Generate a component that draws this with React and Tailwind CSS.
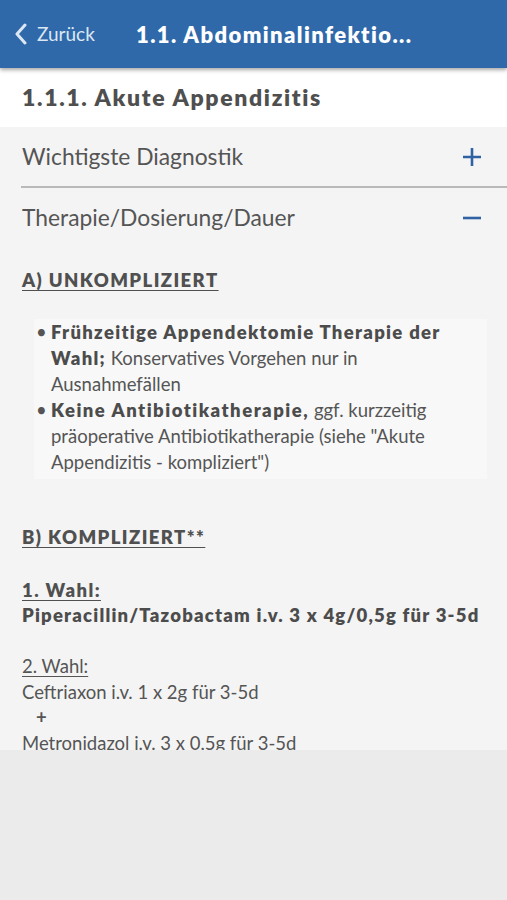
import React from 'react';

const Plus = () => (
    <svg width="20" height="20" viewBox="0 0 20 20" className="text-[#2f62a3]">
        <path d="M10 1v18M1 10h18" stroke="currentColor" strokeWidth="2.6" />
    </svg>
);

const Minus = () => (
    <svg width="20" height="20" viewBox="0 0 20 20" className="text-[#2f62a3]">
        <path d="M1 10h18" stroke="currentColor" strokeWidth="2.6" />
    </svg>
);

const App = () => {
    return (
        <div className="w-[507px] h-[900px] flex flex-col bg-[#ebebeb] font-['Lato','Noto_Sans',sans-serif] overflow-hidden">
            <header className="h-[68px] shrink-0 bg-[#2f69aa] flex items-center shadow-[0_2px_4px_rgba(0,0,0,0.35)] relative z-10">
                <div className="flex items-center pl-[14px] w-[136px] text-[#dce7f4]">
                    <svg width="14" height="22" viewBox="0 0 14 22">
                        <path d="M11 2L3 11l8 9" fill="none" stroke="currentColor" strokeWidth="3" strokeLinecap="round" strokeLinejoin="round" />
                    </svg>
                    <span className="ml-[9px] text-[19px]">Zurück</span>
                </div>
                <h1 className="text-white font-extrabold text-[22px] tracking-[1.4px] whitespace-nowrap">1.1. Abdominalinfektio...</h1>
            </header>

            <div className="h-[59px] shrink-0 bg-white flex items-center pl-[22px]">
                <h2 className="text-[#4f4f4f] font-extrabold text-[23px] tracking-[1.65px] whitespace-nowrap">1.1.1. Akute Appendizitis</h2>
            </div>

            <div className="h-[623px] shrink-0 bg-[#f4f4f4] overflow-hidden text-[#555]">
                <div className="h-[59px] flex items-center justify-between pl-[22px] pr-[25px]">
                    <span className="text-[22.8px]">Wichtigste Diagnostik</span>
                    <Plus />
                </div>
                <div className="ml-[21px] h-[2px] bg-[#b9b9b9]" />
                <div className="h-[59px] flex items-center justify-between pl-[22px] pr-[25px]">
                    <span className="text-[22.8px]">Therapie/Dosierung/Dauer</span>
                    <Minus />
                </div>

                <div className="pl-[22px] pr-[20px] pt-[20px] text-[18.5px]">
                    <p className="font-extrabold tracking-[1.4px] underline underline-offset-[3px] leading-[26px] text-[#505050]">A) UNKOMPLIZIERT</p>
                    <div className="h-[26px]" />
                    <ul className="ml-[12px] bg-[#f8f8f8] pr-[12px] pb-[4px] leading-[26px]">
                        <li className="flex">
                            <span className="w-[17px] shrink-0 pl-[2px]">•</span>
                            <span><b className="font-extrabold tracking-[1.3px] text-[#4c4c4c]">Frühzeitige Appendektomie Therapie der Wahl;</b> Konservatives Vorgehen nur in Ausnahmefällen</span>
                        </li>
                        <li className="flex">
                            <span className="w-[17px] shrink-0 pl-[2px]">•</span>
                            <span><b className="font-extrabold tracking-[1.5px] text-[#4c4c4c]">Keine Antibiotikatherapie,</b> ggf. kurzzeitig präoperative Antibiotikatherapie (siehe "Akute Appendizitis - kompliziert")</span>
                        </li>
                    </ul>
                    <div className="h-[46px]" />
                    <div className="leading-[25.5px]">
                        <p className="font-extrabold tracking-[1.4px] underline underline-offset-[3px] text-[#505050]">B) KOMPLIZIERT**</p>
                        <div className="h-[27px]" />
                        <p className="font-extrabold tracking-[1.4px] underline underline-offset-[3px] text-[#505050]">1. Wahl:</p>
                        <p className="font-extrabold tracking-[1.2px] text-[#4c4c4c] whitespace-nowrap">Piperacillin/Tazobactam i.v. 3 x 4g/0,5g für 3-5d</p>
                        <div className="h-[25.5px]" />
                        <p className="underline underline-offset-[3px]">2. Wahl:</p>
                        <p>Ceftriaxon i.v. 1 x 2g für 3-5d</p>
                        <p className="pl-[14px] font-bold">+</p>
                        <p>Metronidazol i.v. 3 x 0,5g für 3-5d</p>
                    </div>
                </div>
            </div>
        </div>
    );
};

export default App;
